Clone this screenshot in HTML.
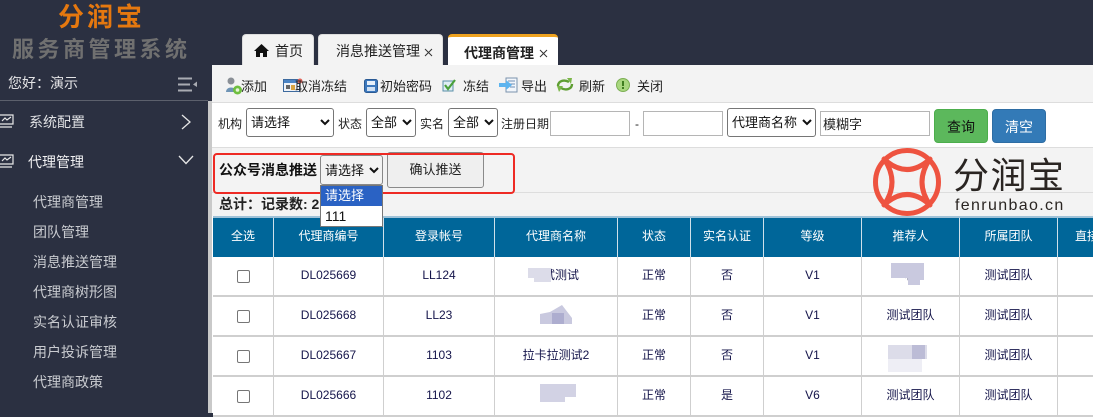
<!DOCTYPE html>
<html><head><meta charset="utf-8">
<style>
*{box-sizing:border-box}
html,body{margin:0;padding:0}
body{width:1093px;height:413px;overflow:hidden;position:relative;background:#2b3041;font-family:"Liberation Sans","WenQuanYi Zen Hei","Noto Sans CJK SC",sans-serif;font-size:13px;color:#222}
.a{position:absolute;white-space:nowrap}
.nav{position:absolute;left:33px;color:#c9cbd0;font-size:14px;line-height:18px;white-space:nowrap}
.tb{position:absolute;top:78px;font-size:13px;line-height:18px;color:#222;white-space:nowrap}
select{position:absolute;font-family:"Liberation Sans","WenQuanYi Zen Hei","Noto Sans CJK SC",sans-serif;font-size:13px;background:#fff;color:#111;border:1px solid #767676;border-radius:3px;padding:0;margin:0}
input.t{position:absolute;height:25px;border:1px solid #b5b5b5;background:#fff;font-size:13px;font-family:"Liberation Sans","WenQuanYi Zen Hei","Noto Sans CJK SC",sans-serif;padding:0 2px;margin:0;color:#222}
.lb{position:absolute;top:115px;font-size:12px;line-height:18px;color:#222;white-space:nowrap}
.th,.td{position:absolute;text-align:center;white-space:nowrap;font-size:12px}
.th{color:#fff;top:216px;height:41px;line-height:41px;background:#006699;border-right:1px solid #cfe0ea}
.td{height:40px;line-height:37px;color:#14144a;border-right:1px solid #cfcfcf;border-bottom:2px solid #cfcfcf;background:#fff}
.cb{position:absolute;width:13px;height:13px;left:237px;border:1px solid #767676;border-radius:2px;background:#fff}
</style></head><body>

<div class="a" style="left:58px;top:0;font-size:26px;line-height:32px;font-weight:700;color:#e5780f;letter-spacing:3px;font-family:'Noto Sans CJK SC',sans-serif">分润宝</div>
<div class="a" style="left:12px;top:34px;font-size:22px;line-height:29px;font-weight:700;color:#707070;letter-spacing:3.5px;font-family:'Noto Sans CJK SC',sans-serif">服务商管理系统</div>
<div class="a" style="left:8px;top:74px;font-size:14px;line-height:18px;color:#e4e4e6">您好：演示</div>
<svg class="a" style="left:178px;top:77px" width="20" height="15"><path d="M0 1.5H14M0 7.5H12M0 13.5H14" stroke="#a9abb2" stroke-width="2"/><path d="M19 4.5V10L15 7.5Z" fill="#a9abb2"/></svg>
<div class="a" style="left:0;top:100px;width:208px;height:1px;background:#5c606c"></div>

<svg class="a" style="left:-1px;top:114px" width="16" height="15" fill="none" stroke="#e8e8e8" stroke-width="1.2"><path d="M1 1H14V10H1M0 13H13M3 7L6 4L8 6L12 3"/></svg>
<div class="a" style="left:29px;top:113px;font-size:14px;line-height:18px;color:#dfe0e3">系统配置</div>
<svg class="a" style="left:180px;top:113px" width="12" height="18" fill="none" stroke="#e6e6e6" stroke-width="1.3"><path d="M2 2L10 9L2 16"/></svg>

<svg class="a" style="left:-1px;top:154px" width="16" height="15" fill="none" stroke="#e8e8e8" stroke-width="1.2"><path d="M1 1H14V10H1M0 13H13M3 7L6 4L8 6L12 3"/></svg>
<div class="a" style="left:28px;top:153px;font-size:14px;line-height:18px;color:#f0f0f2">代理管理</div>
<svg class="a" style="left:178px;top:155px" width="16" height="11" fill="none" stroke="#e6e6e6" stroke-width="1.3"><path d="M1 1L8 8.5L15 1"/></svg>

<div class="nav" style="top:193px">代理商管理</div>
<div class="nav" style="top:223px">团队管理</div>
<div class="nav" style="top:253px">消息推送管理</div>
<div class="nav" style="top:283px">代理商树形图</div>
<div class="nav" style="top:313px">实名认证审核</div>
<div class="nav" style="top:343px">用户投诉管理</div>
<div class="nav" style="top:373px">代理商政策</div>

<div class="a" style="left:208px;top:101px;width:5px;height:312px;background:#c9c9c9"></div>

<div class="a" style="left:242px;top:34px;width:72px;height:32px;background:#f3f3f3;border:1px solid #ddd;border-bottom:0;border-radius:4px 4px 0 0"></div>
<svg class="a" style="left:254px;top:44px" width="15" height="13"><path d="M7.5 0L15 7H13V13H9V9H6V13H2V7H0Z" fill="#111"/></svg>
<div class="a" style="left:275px;top:42px;font-size:14px;line-height:18px;color:#222">首页</div>
<div class="a" style="left:318px;top:34px;width:125px;height:32px;background:#f3f3f3;border:1px solid #ddd;border-bottom:0;border-radius:4px 4px 0 0"></div>
<div class="a" style="left:336px;top:42px;font-size:14px;line-height:18px;color:#222">消息推送管理</div>
<svg class="a" style="left:424px;top:48px" width="9" height="9" stroke="#333" stroke-width="1"><path d="M1 1L8 8M8 1L1 8"/></svg>
<div class="a" style="left:448px;top:34px;width:110px;height:32px;background:#fff;border-top:3px solid #eea21f;border-radius:4px 4px 0 0"></div>
<div class="a" style="left:464px;top:44px;font-size:14px;line-height:18px;font-weight:700;color:#222">代理商管理</div>
<svg class="a" style="left:539px;top:49px" width="9" height="9" stroke="#333" stroke-width="1"><path d="M1 1L8 8M8 1L1 8"/></svg>

<div class="a" style="left:212px;top:65px;width:881px;height:348px;background:#fff"></div>
<div class="a" style="left:212px;top:65px;width:881px;height:38px;background:#f3f3f3;border-bottom:1px solid #ddd"></div>

<svg class="a" style="left:225px;top:77px" width="18" height="18"><circle cx="6" cy="4" r="3.5" fill="#8a8f96"/><path d="M1 15C1 9 11 9 11 15Z" fill="#6f94b5"/><circle cx="12.5" cy="13" r="4.5" fill="#6fbf3f"/><circle cx="12.5" cy="13" r="1.8" fill="#e8f5d8"/></svg>
<div class="tb" style="left:241px">添加</div>
<svg class="a" style="left:283px;top:78px" width="20" height="15"><rect x=".5" y="1.5" width="16" height="12" fill="#f0f3f8" stroke="#3d6a9e"/><rect x="1" y="2" width="15" height="3" fill="#4b84c4"/><rect x="3" y="7" width="4" height="4" fill="#666"/><rect x="8" y="7" width="4" height="5" fill="#d9a441"/><circle cx="17" cy="3" r="2.5" fill="#e0645a"/></svg>
<div class="tb" style="left:295px">取消冻结</div>
<svg class="a" style="left:364px;top:79px" width="14" height="14"><rect x=".5" y=".5" width="13" height="13" rx="2" fill="#3c78bd" stroke="#2a5a94"/><rect x="3" y="2" width="8" height="4" fill="#e7f0fa"/><rect x="3" y="8" width="8" height="4" fill="#cfe0f3"/></svg>
<div class="tb" style="left:380px">初始密码</div>
<svg class="a" style="left:442px;top:78px" width="15" height="15"><rect x="1" y="3" width="10" height="10" fill="#dfeef5" stroke="#5a8fa8"/><path d="M3 7L6 11L13 2" fill="none" stroke="#4aa03a" stroke-width="2.2"/></svg>
<div class="tb" style="left:463px">冻结</div>
<svg class="a" style="left:499px;top:77px" width="20" height="16"><rect x="7" y="1" width="11" height="14" fill="#f2f6fb" stroke="#7b93ad"/><path d="M9 4H16M11 7H16M11 10H16" stroke="#6d8fb5"/><path d="M0 6H7V3L13 8L7 13V10H0Z" fill="#5cb4ef"/></svg>
<div class="tb" style="left:521px">导出</div>
<svg class="a" style="left:556px;top:77px" width="18" height="16" fill="none" stroke="#5f9e33" stroke-width="2.4"><path d="M2 9C2 4 8 2 13 5"/><path d="M16 7C16 12 10 14 5 11"/><path d="M11 1L16 1L15 7Z" fill="#7bb648" stroke="none"/><path d="M1 9L7 9L3 15Z" fill="#7bb648" stroke="none"/></svg>
<div class="tb" style="left:579px">刷新</div>
<svg class="a" style="left:616px;top:78px" width="14" height="14"><circle cx="7" cy="7" r="6.5" fill="#a9d77f" stroke="#7caf53"/><rect x="6" y="3" width="2" height="5" fill="#3f7d1f"/><rect x="6" y="9" width="2" height="2" fill="#3f7d1f"/></svg>
<div class="tb" style="left:637px">关闭</div>

<div class="lb" style="left:218px">机构</div>
<select style="left:246px;top:108px;width:88px;height:29px"><option>请选择</option></select>
<div class="lb" style="left:338px">状态</div>
<select style="left:366px;top:108px;width:50px;height:29px"><option>全部</option></select>
<div class="lb" style="left:420px">实名</div>
<select style="left:448px;top:108px;width:50px;height:29px"><option>全部</option></select>
<div class="lb" style="left:501px">注册日期</div>
<input class="t" style="left:550px;top:111px;width:80px" value="">
<div class="lb" style="left:635px">-</div>
<input class="t" style="left:643px;top:111px;width:80px" value="">
<select style="left:727px;top:108px;width:89px;height:29px"><option>代理商名称</option></select>
<input class="t" style="left:820px;top:111px;width:110px" value="模糊字">
<div class="a" style="left:934px;top:109px;width:54px;height:34px;background:#5cb85c;border:1px solid #4cae4c;border-radius:4px;text-align:center;line-height:34px;font-size:14px;color:#111">查询</div>
<div class="a" style="left:992px;top:109px;width:54px;height:34px;background:#337ab7;border:1px solid #2e6da4;border-radius:4px;text-align:center;line-height:34px;font-size:14px;color:#fff">清空</div>

<div class="a" style="left:212px;top:147px;width:881px;height:46px;background:#f3f3f3;border-top:1px solid #ddd"></div>
<div class="a" style="left:212px;top:192px;width:881px;height:24px;background:#f3f3f3;border-top:1px solid #ddd"></div>

<div class="a" style="left:219px;top:161px;font-size:14px;line-height:18px;font-weight:700;color:#111">公众号消息推送</div>
<select style="left:320px;top:155px;width:63px;height:30px;border:1px solid #888;background:#f3f3f3"><option>请选择</option></select>
<div class="a" style="left:387px;top:152px;width:97px;height:36px;background:#efefef;border:1px solid #8a8a8a;border-radius:3px;text-align:center;line-height:34px;font-size:13px;color:#222">确认推送</div>

<div class="a" style="left:213px;top:153px;width:302px;height:41px;border:2.5px solid #ee2a24;border-radius:4px"></div>

<div class="a" style="left:219px;top:195px;font-size:14px;line-height:18px;font-weight:700;color:#222">总计：记录数: 2</div>

<div class="a" style="left:320px;top:185px;width:63px;height:42px;background:#fff;border:1px solid #777;z-index:5"></div>
<div class="a" style="left:321px;top:186px;width:61px;height:20px;background:#2a62c4;color:#fff;font-size:13px;line-height:20px;padding-left:4px;z-index:6;overflow:hidden">请选择</div>
<div class="a" style="left:325px;top:207px;font-size:14px;line-height:18px;color:#111;z-index:6">111</div>

<svg class="a" style="left:872px;top:147px" width="72" height="72" fill="none" stroke="#ee5340" stroke-width="5">
<circle cx="35" cy="35" r="31.5"/>
<path d="M12 12Q35 33 58 12Q42 35 58 58Q35 37 12 58Q28 35 12 12Z" stroke-linejoin="round"/>
</svg>
<div class="a" style="left:953px;top:150px;font-size:36px;line-height:46px;letter-spacing:1.5px;color:#2a2522;font-family:'Noto Sans CJK SC',sans-serif">分润宝</div>
<div class="a" style="left:955px;top:196px;font-size:16px;line-height:20px;letter-spacing:1.35px;color:#2a2522">fenrunbao.cn</div>

<div class="a" style="left:213px;top:216px;width:880px;height:2px;background:#9fc2d8;z-index:1"></div>
<div class="th" style="left:213px;width:61px">全选</div>
<div class="th" style="left:274px;width:110px">代理商编号</div>
<div class="th" style="left:384px;width:111px">登录帐号</div>
<div class="th" style="left:495px;width:123px">代理商名称</div>
<div class="th" style="left:618px;width:73px">状态</div>
<div class="th" style="left:691px;width:73px">实名认证</div>
<div class="th" style="left:764px;width:98px">等级</div>
<div class="th" style="left:862px;width:98px">推荐人</div>
<div class="th" style="left:960px;width:98px">所属团队</div>
<div class="th" style="left:1058px;width:35px;border:0;text-align:left;padding-left:17px">直接</div>

<div class="td" style="left:213px;top:257px;width:61px"></div><div class="td" style="left:274px;top:257px;width:110px">DL025669</div><div class="td" style="left:384px;top:257px;width:111px">LL124</div><div class="td" style="left:495px;top:257px;width:123px">&nbsp;&nbsp;&nbsp;试测试</div><div class="td" style="left:618px;top:257px;width:73px">正常</div><div class="td" style="left:691px;top:257px;width:73px">否</div><div class="td" style="left:764px;top:257px;width:98px">V1</div><div class="td" style="left:862px;top:257px;width:98px">君</div><div class="td" style="left:960px;top:257px;width:98px">测试团队</div><div class="td" style="left:1058px;top:257px;width:35px;border-right:0"></div>
<div class="td" style="left:213px;top:297px;width:61px"></div><div class="td" style="left:274px;top:297px;width:110px">DL025668</div><div class="td" style="left:384px;top:297px;width:111px">LL23</div><div class="td" style="left:495px;top:297px;width:123px"></div><div class="td" style="left:618px;top:297px;width:73px">正常</div><div class="td" style="left:691px;top:297px;width:73px">否</div><div class="td" style="left:764px;top:297px;width:98px">V1</div><div class="td" style="left:862px;top:297px;width:98px">测试团队</div><div class="td" style="left:960px;top:297px;width:98px">测试团队</div><div class="td" style="left:1058px;top:297px;width:35px;border-right:0"></div>
<div class="td" style="left:213px;top:337px;width:61px"></div><div class="td" style="left:274px;top:337px;width:110px">DL025667</div><div class="td" style="left:384px;top:337px;width:111px">1103</div><div class="td" style="left:495px;top:337px;width:123px">拉卡拉测试2</div><div class="td" style="left:618px;top:337px;width:73px">正常</div><div class="td" style="left:691px;top:337px;width:73px">否</div><div class="td" style="left:764px;top:337px;width:98px">V1</div><div class="td" style="left:862px;top:337px;width:98px"></div><div class="td" style="left:960px;top:337px;width:98px">测试团队</div><div class="td" style="left:1058px;top:337px;width:35px;border-right:0"></div>
<div class="td" style="left:213px;top:377px;width:61px"></div><div class="td" style="left:274px;top:377px;width:110px">DL025666</div><div class="td" style="left:384px;top:377px;width:111px">1102</div><div class="td" style="left:495px;top:377px;width:123px">&nbsp;</div><div class="td" style="left:618px;top:377px;width:73px">正常</div><div class="td" style="left:691px;top:377px;width:73px">是</div><div class="td" style="left:764px;top:377px;width:98px">V6</div><div class="td" style="left:862px;top:377px;width:98px">测试团队</div><div class="td" style="left:960px;top:377px;width:98px">测试团队</div><div class="td" style="left:1058px;top:377px;width:35px;border-right:0"></div>

<div class="cb" style="top:270px"></div><div class="cb" style="top:310px"></div><div class="cb" style="top:350px"></div><div class="cb" style="top:390px"></div>

<svg class="a" style="left:500px;top:256px" width="440" height="157">
<path d="M28 12H51V26H34V22H28Z" fill="#dcdce9"/>
<path d="M40 68V58L50 56L62 49L72 62V68Z" fill="#c9c9df"/><rect x="52" y="57" width="12" height="11" fill="#adadcf"/>
<path d="M391 7H424V24H420V29H408V22H391Z" fill="#c9c9df"/>
<path d="M388 89H427V103H422V116H388Z" fill="#dcdce9"/><rect x="388" y="103" width="34" height="13" fill="#eeeef5"/><rect x="412" y="89" width="13" height="14" fill="#bcbcd6"/>
<path d="M40 128H76V141H65V146H40Z" fill="#d2d2e4"/>
</svg>
</body></html>
